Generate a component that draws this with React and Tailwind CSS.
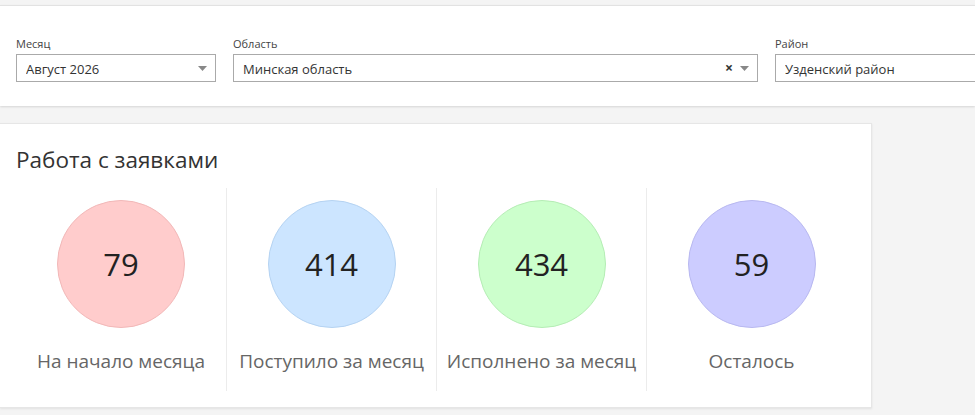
import React from 'react';

const stats = [
    { value: 79, label: 'На начало месяца', circle: 'bg-[#ffcccc] border-[#f2b8b8]' },
    { value: 414, label: 'Поступило за месяц', circle: 'bg-[#cce5ff] border-[#b5d3f2]' },
    { value: 434, label: 'Исполнено за месяц', circle: 'bg-[#ccffcc] border-[#b5edb5]' },
    { value: 59, label: 'Осталось', circle: 'bg-[#ccccff] border-[#b8b8f0]' },
];

function Caret() {
    return (
        <svg width="9" height="5" viewBox="0 0 9 5" className="shrink-0">
            <path d="M0 0h9L4.5 5z" fill="#888" />
        </svg>
    );
}

function Select({ label, value, width, clearable, caret = true }) {
    return (
        <div className={`flex shrink-0 flex-col ${width}`}>
            <label className="mb-[3px] text-[11px] leading-[14px] text-[#444]">{label}</label>
            <div className="flex h-[28px] items-center border border-[#aaa] bg-white pl-[9px] pr-[8px]">
                <span className="flex-1 truncate pt-[3px] text-[13px] text-[#333]">{value}</span>
                {clearable && <span className="mr-[7px] text-[14px] font-bold leading-none text-[#333]">×</span>}
                {caret && <Caret />}
            </div>
        </div>
    );
}

export default function App() {
    return (
        <div className="min-h-screen overflow-hidden bg-[#f4f4f4] pt-[5px] font-['Open_Sans','Noto_Sans',sans-serif]">
            {/* Filters */}
            <div className="flex gap-[17px] border-t border-[#e2e2e2] bg-white pb-[24px] pl-[16px] pt-[31px] shadow-[0_1px_2px_rgba(0,0,0,0.12)]">
                <Select label="Месяц" value="Август 2026" width="w-[200px]" />
                <Select label="Область" value="Минская область" width="w-[525px]" clearable />
                <Select label="Район" value="Узденский район" width="w-[230px]" caret={false} />
            </div>

            {/* Card */}
            <div className="mt-[17px] w-[872px] border border-l-0 border-[#e6e6e6] bg-white pb-[16px] pl-[16px] pr-[15px] shadow-[0_1px_2px_rgba(0,0,0,0.08)]">
                <h2 className="pt-[21px] text-[22.5px] leading-[30px] text-[#333]">Работа с заявками</h2>
                <div className="mt-[13px] grid grid-cols-4">
                    {stats.map((s, i) => (
                        <div key={s.label} className={`flex flex-col items-center pt-[12px] pb-[16px] ${i > 0 ? 'border-l border-[#ececec]' : ''}`}>
                            <div className={`flex h-[128px] w-[128px] items-center justify-center rounded-full border ${s.circle}`}>
                                <span className="text-[31px] text-[#222]">{s.value}</span>
                            </div>
                            <div className="mt-[19px] text-[19px] leading-[28px] text-[#666]">{s.label}</div>
                        </div>
                    ))}
                </div>
            </div>
        </div>
    );
}
